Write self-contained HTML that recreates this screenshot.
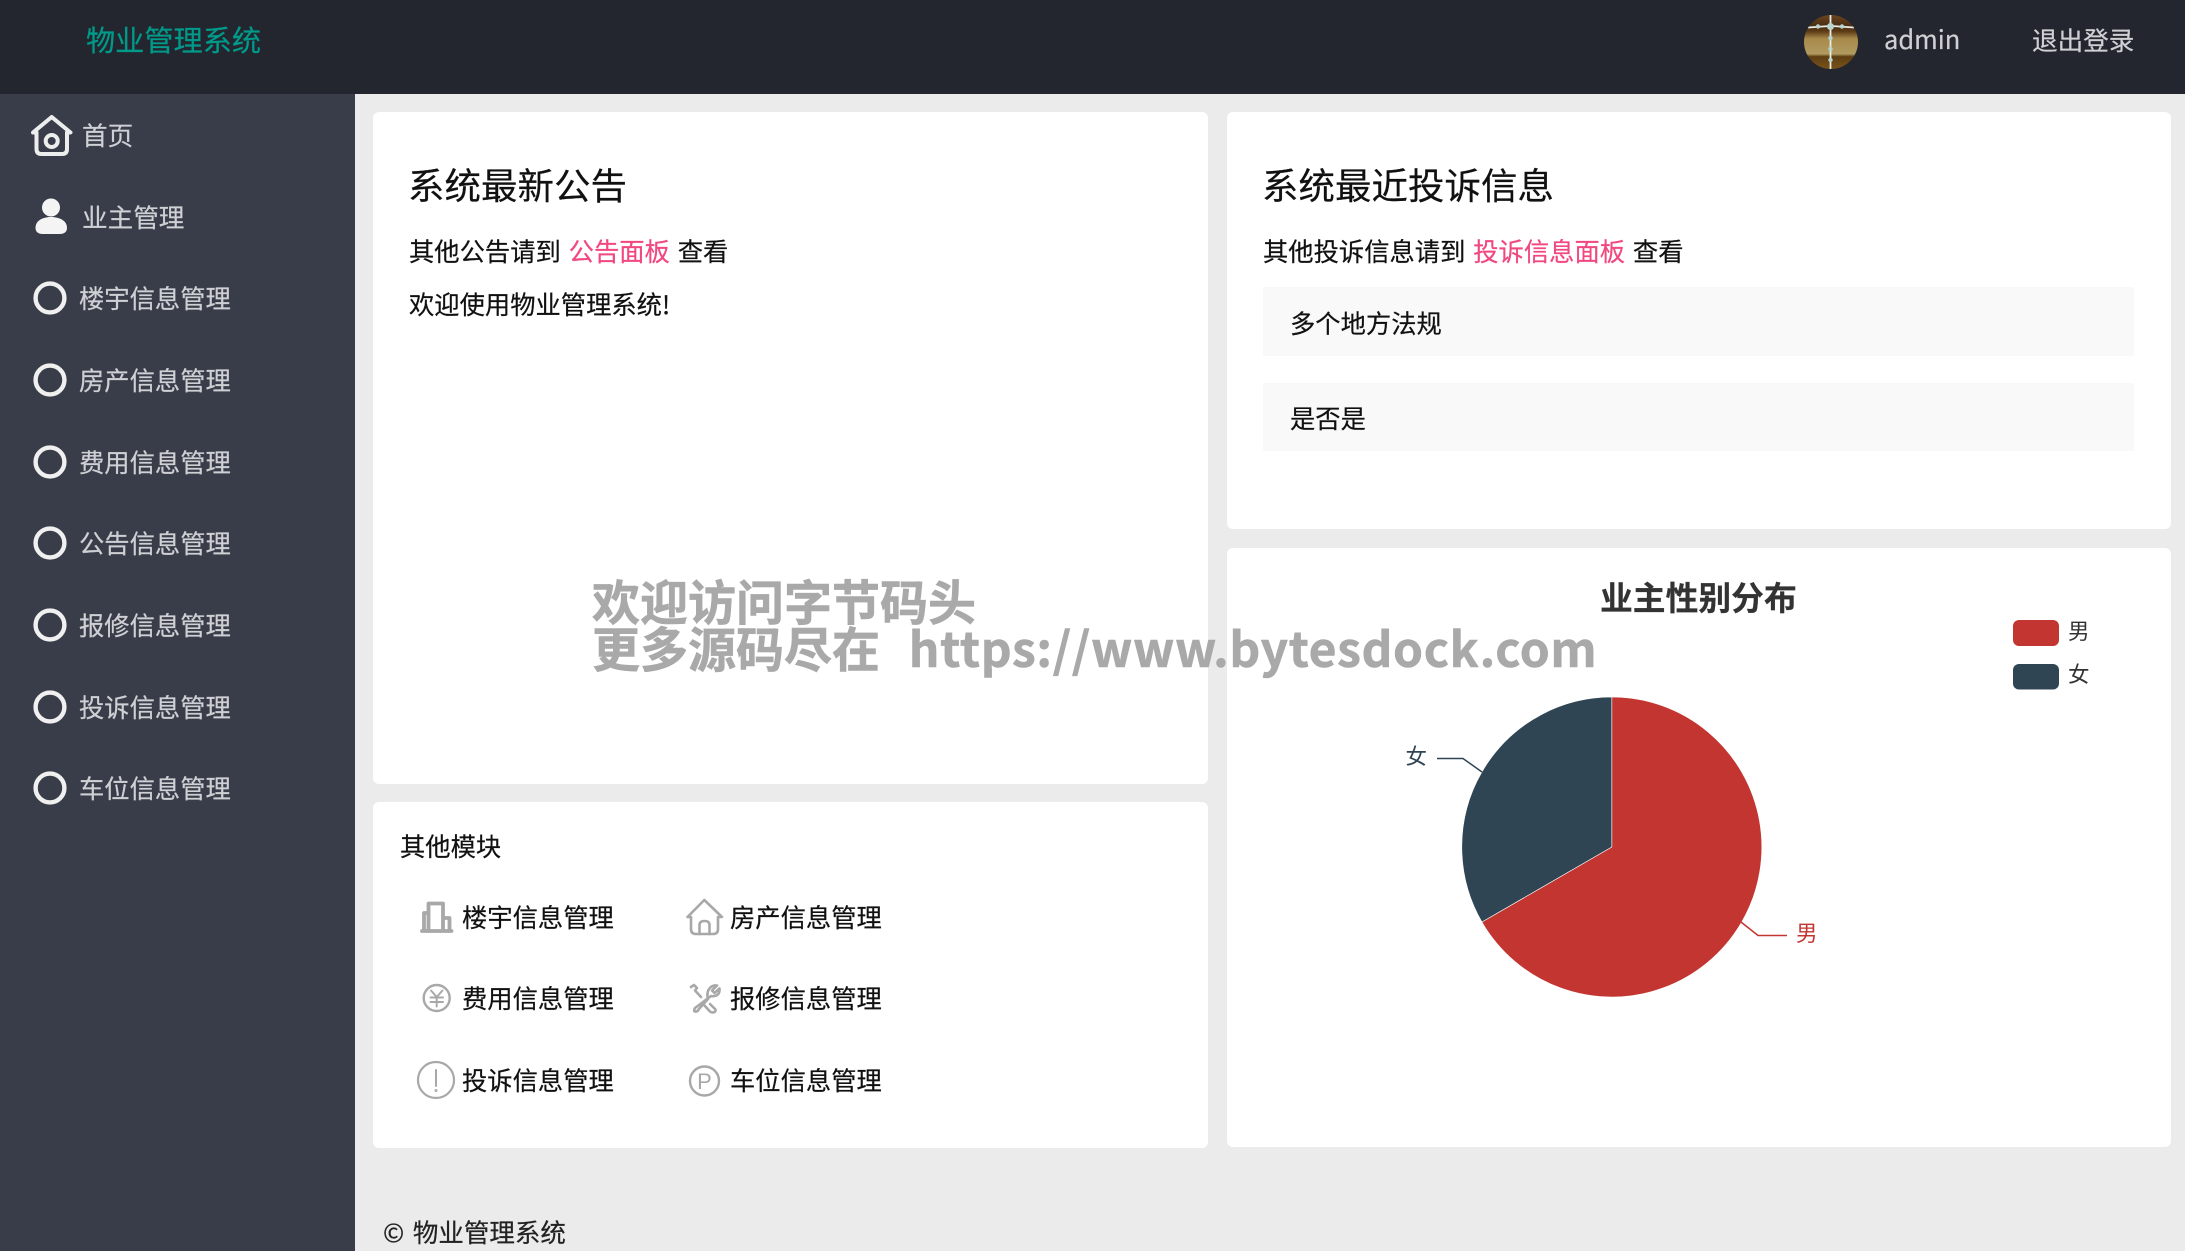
<!DOCTYPE html>
<html lang="zh-CN">
<head>
<meta charset="utf-8">
<title>物业管理系统</title>
<style>
html,body{margin:0;padding:0;width:2185px;height:1251px;overflow:hidden;background:#ebebeb;}
body{position:relative;font-family:"Noto Sans CJK SC","Liberation Sans",sans-serif;font-size:25.3px;color:#111;word-spacing:2.2px;-webkit-text-stroke:.2px currentColor;}
.b{position:absolute;}
.card{position:absolute;background:#fff;border-radius:6px;}
.t{position:absolute;white-space:nowrap;line-height:40px;margin-top:-20px;}
.s{color:#cfd0d4;}
.h{font-size:36.5px;color:#111;}
.p{color:#f0487f;}
svg{position:absolute;left:0;top:0;}
.wm{position:absolute;white-space:nowrap;font-weight:700;font-size:48px;line-height:48px;color:#a9a9a9;word-spacing:0;-webkit-text-stroke:.6px #a9a9a9;}
.wm span{letter-spacing:.62px;margin-left:7px;}
</style>
</head>
<body>
<div class="b" style="left:0;top:0;width:2185px;height:94px;background:#23262e"></div>
<div class="b" style="left:0;top:94px;width:355px;height:1157px;background:#393d49"></div>

<div class="card" style="left:373px;top:112px;width:835px;height:672px"></div>
<div class="card" style="left:1227px;top:112px;width:944px;height:417px"></div>
<div class="card" style="left:373px;top:802px;width:835px;height:346px"></div>
<div class="card" style="left:1227px;top:548px;width:944px;height:599px"></div>
<div class="b" style="left:1263px;top:287px;width:871px;height:69px;background:#f9f9f9"></div>
<div class="b" style="left:1263px;top:383px;width:871px;height:68px;background:#f9f9f9"></div>

<svg width="2185" height="1251" viewBox="0 0 2185 1251" style="-webkit-text-stroke:0">
  <defs>
    <clipPath id="av"><circle cx="1831" cy="42" r="27"/></clipPath>
    <linearGradient id="ag" x1="0" y1="0" x2="0" y2="1">
      <stop offset="0" stop-color="#6b4420"/><stop offset=".2" stop-color="#4a2e12"/>
      <stop offset=".3" stop-color="#5c3a14"/><stop offset=".44" stop-color="#a88a4a"/>
      <stop offset=".72" stop-color="#b09a60"/><stop offset=".77" stop-color="#5e3f12"/>
      <stop offset="1" stop-color="#7a5218"/>
    </linearGradient>
  </defs>
  <!-- avatar -->
  <g clip-path="url(#av)">
    <rect x="1804" y="15" width="54" height="54" fill="url(#ag)"/>
    <path d="M1808 27.500L1830 26H1832L1854 27.500M1830.500 15V69" stroke="#e8ecea" stroke-width="1.800" fill="none"/>
    <circle cx="1830.500" cy="26.500" r="3.500" fill="#b9d4cf"/><circle cx="1818" cy="26.500" r="2.200" fill="#b9d4cf"/><circle cx="1842" cy="26.500" r="2.200" fill="#b9d4cf"/>
    <circle cx="1830.500" cy="38" r="2.200" fill="#b9d4cf"/><circle cx="1830.500" cy="49" r="2.200" fill="#b9d4cf"/><circle cx="1830.500" cy="60" r="2.200" fill="#b9d4cf"/>
  </g>
  <!-- sidebar icons -->
  <g fill="none" stroke="#eceded" stroke-width="4" stroke-linejoin="round" stroke-linecap="round">
    <path d="M33 132.500L51.700 117L70.500 132.500H67V149Q67 154 62 154H41.500Q36.500 154 36.500 149V132.500Z"/>
    <circle cx="51.700" cy="141" r="6"/>
    <g stroke-width="4.400" stroke="#f0f0f0">
    <circle cx="50" cy="298" r="14.400"/><circle cx="50" cy="380" r="14.400"/><circle cx="50" cy="462" r="14.400"/>
    <circle cx="50" cy="543" r="14.400"/><circle cx="50" cy="625" r="14.400"/><circle cx="50" cy="707" r="14.400"/><circle cx="50" cy="788" r="14.400"/>
    </g>
  </g>
  <circle cx="51" cy="207.500" r="9" fill="#f4f4f4"/>
  <path d="M35.500 228C35.500 220 43.500 217 51 217C58.500 217 67 220 67 228C67 232 64 234 60 234H42.500C38.500 234 35.500 232 35.500 228Z" fill="#f4f4f4"/>
  <!-- module icons -->
  <g fill="none" stroke="#a8a8a8" stroke-width="2.600" stroke-linejoin="round" stroke-linecap="round">
    <path d="M428.500 930V903.500H443V930M428.500 913H424V930M443 918H449.500V930" stroke-width="3.800"/>
    <path d="M422 931H451.500" stroke-width="3.800"/>
    <path d="M687.500 917L704.300 900L722 917H718V929Q718 934 713 934H696Q691 934 691 929V917Z"/>
    <path d="M699.500 934V925Q699.500 921 704.500 921Q709.500 921 709.500 925V934"/>
    <circle cx="436.700" cy="998" r="13" stroke-width="2.400"/>
    <path d="M431 990.500L436.700 997L442.500 990.500M430.500 997.500H443M430.500 1002H443M436.700 997V1006.500" stroke-width="1.900"/>
    <circle cx="436" cy="1080" r="18" stroke-width="2.200"/>
    <path d="M436 1070V1086" stroke-width="2"/><circle cx="436" cy="1090.500" r=".6" stroke-width="1.800"/>
    <path d="M691 987L694 985L697 988L695 990.500L701 997M710 1004L715.500 1009.500Q716 1012 713 1012.500Q711 1012.500 710 1011.500L704 1005" stroke-width="2.600"/>
    <path d="M717 985.500L712 990.500L714.500 993L719.500 988.500Q720 995 714.500 996Q712.500 996.500 711 996L695 1008Q693 1012 696 1011.500Q698 1011.500 698.500 1009.500L708 999Q706 991 711 987Q713.500 985 717 985.500Z" stroke-width="2.600"/>
    <circle cx="704.500" cy="1081" r="14.500" stroke-width="2.400"/>
  </g>
  <text x="704.500" y="1089" text-anchor="middle" font-size="22" fill="#a8a8a8" font-family="Liberation Sans, sans-serif">P</text>
  <!-- pie -->
  <g transform="translate(.8 0)">
  <path d="M1611 847V697A150 150 0 1 1 1481.100 922Z" fill="#c23531" stroke="#fff" stroke-width=".6"/>
  <path d="M1611 847L1481.100 922A150 150 0 0 1 1611 697Z" fill="#2f4554" stroke="#fff" stroke-width=".6"/>
  </g>
  <path d="M1437 758.500H1463L1482 772" fill="none" stroke="#2f4554" stroke-width="1.500"/>
  <path d="M1741 922L1758 935.500H1787" fill="none" stroke="#c23531" stroke-width="1.500"/>
  <!-- legend -->
  <rect x="2013" y="620" width="46" height="26" rx="6" fill="#c23531"/>
  <rect x="2013" y="664" width="46" height="25.500" rx="6" fill="#2f4554"/>
</svg>

<!-- header -->
<div class="t" style="left:86px;top:39px;font-size:29.2px;color:#009a8a">物业管理系统</div>
<div class="t s" style="left:1884px;top:39px;font-size:25.5px">admin</div>
<div class="t s" style="left:2032px;top:40px;font-size:25.6px">退出登录</div>

<!-- sidebar -->
<div class="t s" style="left:82px;top:134.500px;font-size:25.6px">首页</div>
<div class="t s" style="left:82px;top:216.500px;font-size:25.6px">业主管理</div>
<div class="t s" style="left:79px;top:298px">楼宇信息管理</div>
<div class="t s" style="left:79px;top:380px">房产信息管理</div>
<div class="t s" style="left:79px;top:462px">费用信息管理</div>
<div class="t s" style="left:79px;top:543px">公告信息管理</div>
<div class="t s" style="left:79px;top:625px">报修信息管理</div>
<div class="t s" style="left:79px;top:707px">投诉信息管理</div>
<div class="t s" style="left:79px;top:788px">车位信息管理</div>

<!-- card 1 -->
<div class="t h" style="left:408px;top:183.500px">系统最新公告</div>
<div class="t" style="left:409px;top:250.500px">其他公告请到 <span class="p">公告面板</span> 查看</div>
<div class="t" style="left:409px;top:303.500px">欢迎使用物业管理系统!</div>

<!-- card 2 -->
<div class="t h" style="left:1262px;top:183.500px">系统最近投诉信息</div>
<div class="t" style="left:1263px;top:250.500px">其他投诉信息请到 <span class="p">投诉信息面板</span> 查看</div>
<div class="t" style="left:1290px;top:323px">多个地方法规</div>
<div class="t" style="left:1290px;top:418px">是否是</div>

<!-- modules -->
<div class="t" style="left:400px;top:846px">其他模块</div>
<div class="t" style="left:462px;top:917px">楼宇信息管理</div>
<div class="t" style="left:730px;top:917px">房产信息管理</div>
<div class="t" style="left:462px;top:998px">费用信息管理</div>
<div class="t" style="left:730px;top:998px">报修信息管理</div>
<div class="t" style="left:462px;top:1080px">投诉信息管理</div>
<div class="t" style="left:730px;top:1080px">车位信息管理</div>

<!-- footer -->
<div class="t" style="left:383px;top:1232px;color:#222;font-size:25.5px;word-spacing:3px">© 物业管理系统</div>

<!-- chart text -->
<div class="t" style="left:1600px;top:597px;font-size:32.8px;font-weight:700;color:#333">业主性别分布</div>
<div class="t" style="left:2068px;top:631px;font-size:21.500px;color:#333;-webkit-text-stroke:0">男</div>
<div class="t" style="left:2068px;top:674px;font-size:21.500px;color:#333;-webkit-text-stroke:0">女</div>
<div class="t" style="left:1405.500px;top:756px;font-size:21.500px;color:#2f4554;-webkit-text-stroke:0">女</div>
<div class="t" style="left:1796px;top:933px;font-size:21.500px;color:#c23531;-webkit-text-stroke:0">男</div>

<!-- watermark -->
<div class="wm" style="left:592px;top:575px">欢迎访问字节码头</div>
<div class="wm" style="left:592px;top:622px">更多源码尽在&nbsp; <span>https://www.bytesdock.com</span></div>
</body>
</html>
